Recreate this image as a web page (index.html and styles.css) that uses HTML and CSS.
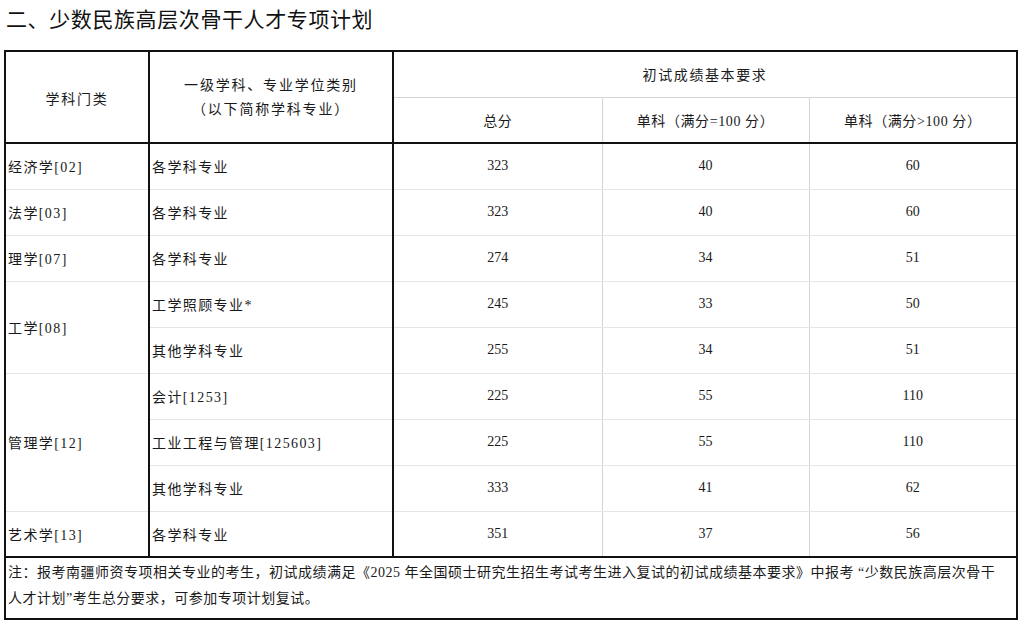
FILE: index.html
```html
<!DOCTYPE html>
<html lang="zh-CN">
<head>
<meta charset="utf-8">
<link rel="stylesheet" href="styles.css">
</head>
<body>
<h2 class="title">二、少数民族高层次骨干人才专项计划</h2>
<table class="score">
  <colgroup>
    <col class="c1"><col class="c2"><col class="c3"><col class="c4"><col class="c5">
  </colgroup>
  <thead>
    <tr class="h1">
      <th rowspan="2" class="k cat">学科门类</th>
      <th rowspan="2" class="k major">一级学科、专业学位类别<br>（以下简称学科专业）</th>
      <th colspan="3" class="group">初试成绩基本要求</th>
    </tr>
    <tr class="h2">
      <th class="sub">总分</th>
      <th class="sub">单科（满分=100 分）</th>
      <th class="sub last">单科（满分&gt;100 分）</th>
    </tr>
  </thead>
  <tbody>
    <tr><td class="k">经济学[02]</td><td class="k">各学科专业</td><td>323</td><td>40</td><td class="last">60</td></tr>
    <tr><td class="k">法学[03]</td><td class="k">各学科专业</td><td>323</td><td>40</td><td class="last">60</td></tr>
    <tr><td class="k">理学[07]</td><td class="k">各学科专业</td><td>274</td><td>34</td><td class="last">51</td></tr>
    <tr><td class="k" rowspan="2">工学[08]</td><td class="k">工学照顾专业*</td><td>245</td><td>33</td><td class="last">50</td></tr>
    <tr><td class="k">其他学科专业</td><td>255</td><td>34</td><td class="last">51</td></tr>
    <tr><td class="k" rowspan="3">管理学[12]</td><td class="k">会计[1253]</td><td>225</td><td>55</td><td class="last">110</td></tr>
    <tr><td class="k">工业工程与管理[125603]</td><td>225</td><td>55</td><td class="last">110</td></tr>
    <tr><td class="k">其他学科专业</td><td>333</td><td>41</td><td class="last">62</td></tr>
    <tr class="end"><td class="k">艺术学[13]</td><td class="k">各学科专业</td><td>351</td><td>37</td><td class="last">56</td></tr>
  </tbody>
  <tfoot>
    <tr>
      <td colspan="5" class="note"><div class="line">注：报考南疆师资专项相关专业的考生，初试成绩满足《2025 年全国硕士研究生招生考试考生进入复试的初试成绩基本要求》中报考 “少数民族高层次骨干</div><div class="line">人才计划”考生总分要求，可参加专项计划复试。</div></td>
    </tr>
  </tfoot>
</table>
</body>
</html>
```

FILE: styles.css
```css
html, body {
  margin: 0;
  padding: 0;
  background: #ffffff;
}
body {
  padding: 0 4px;
  color: #161616;
}
.title {
  margin: 0 0 14px 2px;
  font-family: "Noto Sans CJK SC", sans-serif;
  font-weight: 400;
  font-size: 21px;
  line-height: 36px;
  letter-spacing: 0.6px;
  color: #111;
}
.score {
  border-collapse: collapse;
  table-layout: fixed;
  width: 1012px;
  font-family: "Liberation Serif", "Noto Sans CJK SC", serif;
  font-size: 14px;
  color: #1a1a1a;
  border: 2px solid #111;
}
.c1 { width: 144px; }
.c2 { width: 244px; }
.c3 { width: 209px; }
.c4 { width: 207px; }
.c5 { width: 208px; }
.score th,
.score td {
  padding: 0;
  font-weight: 400;
  text-align: center;
  vertical-align: middle;
  border-top: 1px solid #e6e6e6;
  border-bottom: 1px solid #e6e6e6;
  border-right: 1px solid #d4d4d4;
}
.score th.k,
.score td.k {
  border-right: 2px solid #111;
}
.score td.k {
  text-align: left;
  padding-left: 2px;
  letter-spacing: 1.4px;
}
.score th.k {
  letter-spacing: 1.8px;
  line-height: 24px;
}
.score th.cat { padding-top: 6px; }
.score th.major { padding-top: 2px; }
.score .last { border-right: 2px solid #111; }
.h1 { height: 46px; }
.h2 { height: 46px; }
.score th.group {
  letter-spacing: 1.6px;
  border-bottom: 1px solid #d4d4d4;
  border-right: 2px solid #111;
}
.score th.sub {
  letter-spacing: 0.6px;
  border-bottom: 2px solid #111;
}
.score th.k { border-bottom: 2px solid #111; }
.score tbody tr { height: 46px; }
.score tbody tr.end td { border-bottom: 2px solid #111; }
.score td.note {
  text-align: left;
  height: 58px;
  padding: 2px 0 0 2px;
  vertical-align: top;
  letter-spacing: 0.5px;
  border-right: 2px solid #111;
  border-bottom: 2px solid #111;
}
.note .line {
  white-space: nowrap;
  overflow: hidden;
  line-height: 26px;
}
```
